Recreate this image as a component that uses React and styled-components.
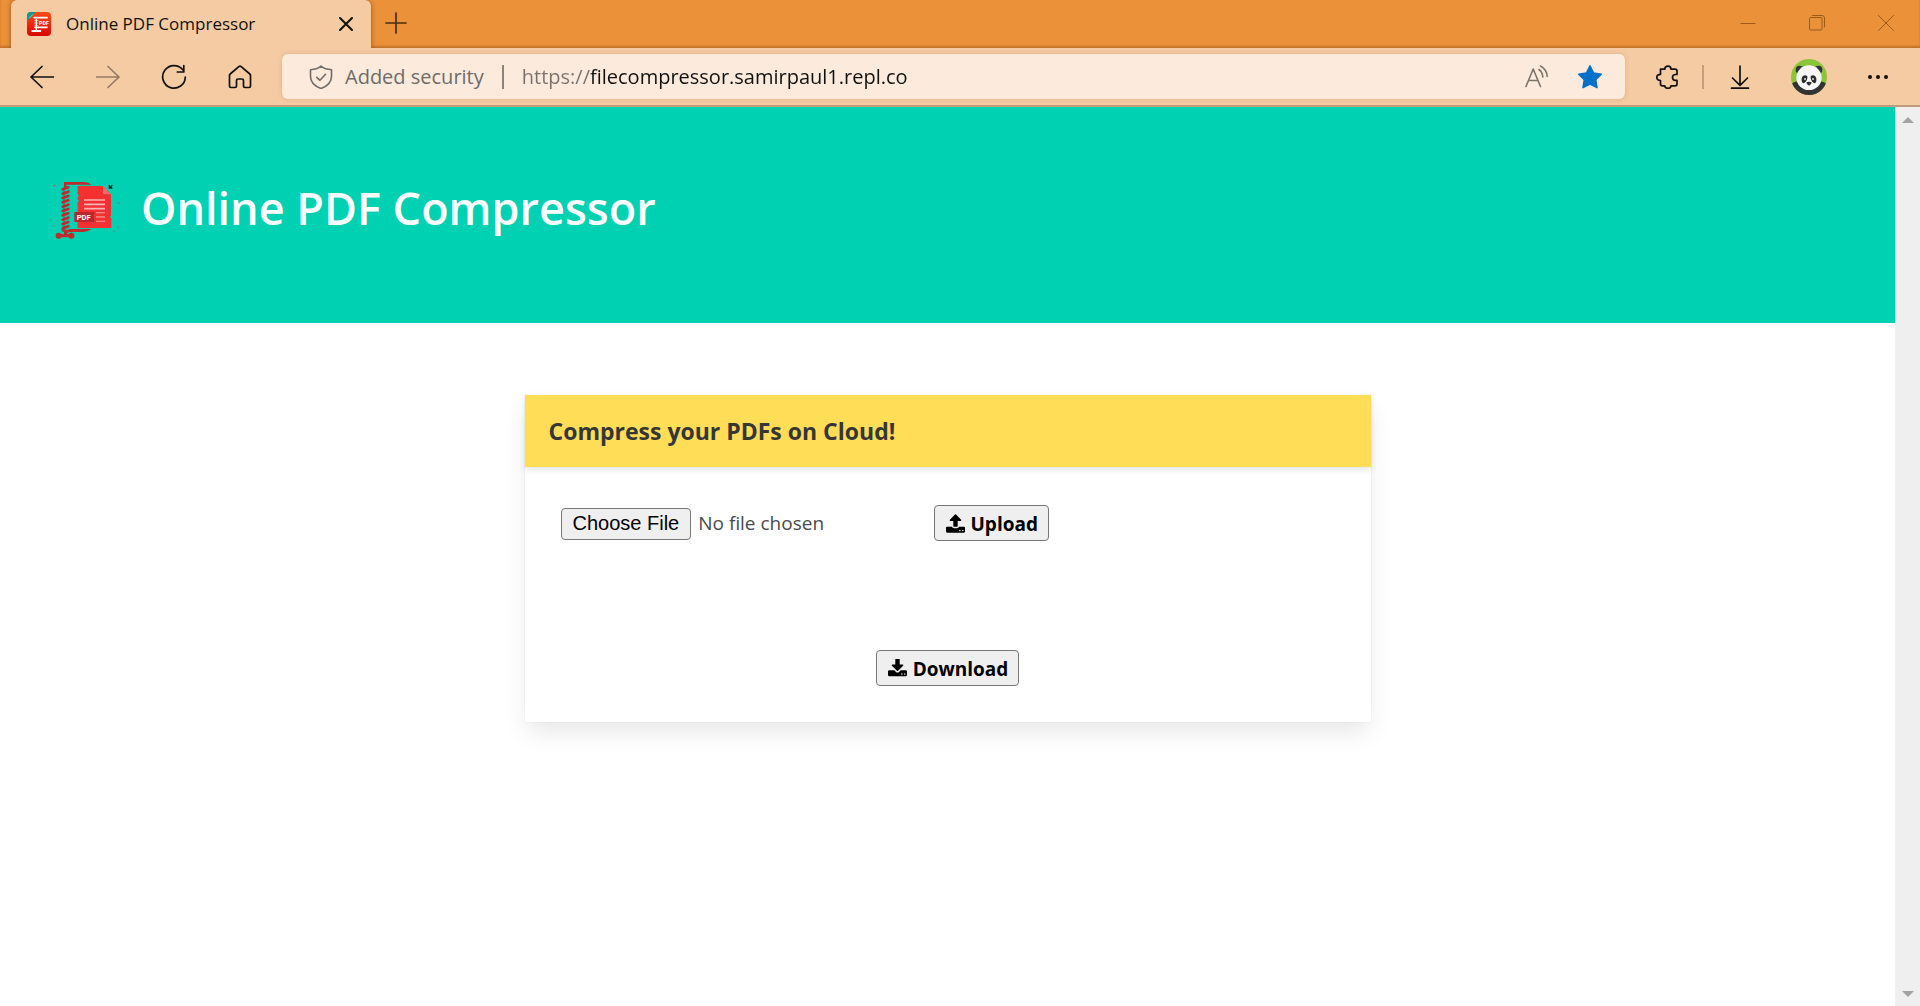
import React from "react";
import styled, { createGlobalStyle } from "styled-components";

const Global = createGlobalStyle`
  *, *::before, *::after { box-sizing: border-box; }
  body { margin: 0; background: #fff; }
  button, input { font: inherit; margin: 0; }
`;

const ui = `"Open Sans", "Noto Sans", sans-serif`;

const Window = styled.div`
  display: flex;
  flex-direction: column;
  height: 100vh;
  font-family: ${ui};
  overflow: hidden;
`;

const TabStrip = styled.header`
  display: flex;
  flex: none;
  height: 48px;
  padding-left: 11px;
  background: #eb9139;
  box-shadow: inset 0 -2px 2px rgba(120, 60, 10, 0.35);
`;

const Tab = styled.div`
  display: flex;
  align-items: center;
  width: 360px;
  padding: 0 10px 0 16px;
  border-radius: 6px 6px 0 0;
  background: #f5cba4;
  box-shadow: 0 0 5px rgba(100, 45, 0, 0.6);
  clip-path: inset(0 -6px 0 -6px);
`;

const TabTitle = styled.span`
  flex: 1;
  margin-left: 15px;
  font-size: 17px;
  line-height: 24px;
  color: #111;
  white-space: nowrap;
`;

const IconButton = styled.button`
  display: flex;
  align-items: center;
  justify-content: center;
  flex: none;
  width: ${(p) => p.$width}px;
  height: 46px;
  padding: 0;
  border: 0;
  background: none;
  color: ${(p) => p.$color || "#111"};
`;

const WindowControls = styled.div`
  display: flex;
  margin-left: auto;
`;

const Toolbar = styled.nav`
  display: flex;
  align-items: center;
  flex: none;
  height: 59px;
  padding: 0 9px;
  border-bottom: 2px solid #c09c7c;
  background: #f5cba4;
`;

const AddressBar = styled.form`
  display: flex;
  align-items: center;
  flex: 1;
  min-width: 0;
  height: 45px;
  margin: 0 8px 0 9px;
  padding: 0 8px 0 27px;
  border-radius: 6px;
  background: #fcebdc;
  box-shadow: 0 0 5px rgba(150, 80, 20, 0.22);
`;

const Security = styled.button`
  display: flex;
  align-items: center;
  gap: 12px;
  padding: 0;
  border: 0;
  background: none;
  color: #6f6b68;
  font-size: 20px;
  line-height: 28px;
  white-space: nowrap;
`;

const Rule = styled.span`
  flex: none;
  width: 2px;
  height: 24px;
  margin: 0 ${(p) => p.$gap}px;
  background: ${(p) => p.$color};
`;

const Url = styled.input`
  flex: 1;
  min-width: 0;
  height: 32px;
  padding: 0;
  border: 0;
  outline: 0;
  font-size: 20px;
  color: transparent;
  background: linear-gradient(90deg, #777270 68px, #111 68px);
  -webkit-background-clip: text;
  background-clip: text;
`;

const Actions = styled.div`
  display: flex;
  align-items: center;
  gap: 3px;
`;

const Viewport = styled.div`
  display: flex;
  flex: 1;
  min-height: 0;
`;

const Page = styled.div`
  flex: 1;
  min-width: 0;
`;

const ScrollTrack = styled.div`
  display: flex;
  flex-direction: column;
  justify-content: space-between;
  width: 25px;
  background: #efefef;
`;

const ScrollButton = styled.button`
  display: flex;
  align-items: center;
  justify-content: center;
  height: 25px;
  padding: 0;
  border: 0;
  background: none;
`;

const Hero = styled.section`
  display: flex;
  align-items: flex-start;
  gap: 21px;
  padding: 68px 50px 78px;
  background: #00d1b2;
`;

const HeroTitle = styled.h1`
  margin: 0;
  font-size: 45px;
  font-weight: 600;
  line-height: 66px;
  color: #fff;
`;

const Main = styled.main`
  padding: 72px 24px;
`;

const Card = styled.section`
  max-width: 846px;
  margin: 0 auto;
  background: #fff;
  box-shadow: 0 12px 24px -3px rgba(10, 10, 10, 0.1), 0 0 0 1px rgba(10, 10, 10, 0.02);
`;

const CardTitle = styled.h2`
  margin: 0;
  padding: 20px 24px;
  background: #ffdd57;
  box-shadow: 0 3px 6px rgba(10, 10, 10, 0.1);
  font-size: 23px;
  font-weight: 700;
  line-height: 32px;
  color: #363636;
`;

const CardBody = styled.div`
  display: flex;
  flex-direction: column;
  gap: 109px;
  padding: 38px 36px 36px;
`;

const UploadRow = styled.form`
  display: grid;
  grid-template-columns: 373px auto;
  justify-content: start;
  align-items: end;
`;

const FileInput = styled.input`
  height: 34px;
  font-size: 19px;
  line-height: 32px;
  color: #4a4a4a;

  &::file-selector-button {
    height: 32px;
    margin: 0 7px 0 0;
    padding: 0 11px;
    border: 1px solid #767676;
    border-radius: 4px;
    background: #efefef;
    color: #000;
    font: 20px "Liberation Sans", Arial, sans-serif;
  }
`;

const ActionButton = styled.button`
  display: flex;
  align-items: center;
  align-self: center;
  gap: 6px;
  height: 36px;
  padding: 1px 10px 0 11px;
  border: 1px solid #767676;
  border-radius: 4px;
  background: #efefef;
  color: #000;
  font-size: 19px;
  font-weight: 700;
  line-height: 32px;
`;

function Stroke({ w, h = w, d, sw = 1.7, children }) {
  return (
    <svg width={w} height={h} viewBox={`0 0 ${w} ${h}`} fill="none" stroke="currentColor"
      strokeWidth={sw} strokeLinecap="round" strokeLinejoin="round" aria-hidden="true">
      {d && <path d={d} />}
      {children}
    </svg>
  );
}

function Favicon() {
  return (
    <svg width="24" height="24" viewBox="0 0 72 72" aria-hidden="true">
      <defs>
        <linearGradient id="fav" x1="0" y1="0" x2="0" y2="1">
          <stop offset="0" stopColor="#ff4a12" />
          <stop offset="1" stopColor="#d80606" />
        </linearGradient>
      </defs>
      <rect width="72" height="72" rx="12" fill="url(#fav)" />
      <path d="M12 0H27L0 27V12Q0 0 12 0Z" fill="#109c8c" />
      <path d="M7 18L18 7" stroke="#7fd6cc" strokeWidth="3" />
      <path d="M22 17H60M24 46H60" stroke="#fff" strokeWidth="5" strokeLinecap="round" />
      <path d="M28 20V56" stroke="#fff" strokeWidth="4" />
      <path d="M16 57H40" stroke="#fff" strokeWidth="6" strokeLinecap="round" />
      <path d="M22 26H34M22 33H34M22 40H34" stroke="#fff" strokeWidth="2" />
      <text x="36" y="38" fontSize="16" fontWeight="700" fill="#fff" fontFamily="Roboto, sans-serif">PDF</text>
    </svg>
  );
}

function Panda() {
  return (
    <svg width="36" height="36" viewBox="0 0 108 108" aria-hidden="true">
      <clipPath id="avatar"><circle cx="54" cy="54" r="54" /></clipPath>
      <g clipPath="url(#avatar)">
        <rect width="108" height="108" fill="#8ac53a" />
        <path d="M0 108V76Q10 66 22 68H86Q98 66 108 76V108Z" fill="#333" />
        <circle cx="26" cy="32" r="12" fill="#333" />
        <circle cx="82" cy="32" r="12" fill="#333" />
        <ellipse cx="54" cy="56" rx="38" ry="37" fill="#f7f7f7" />
        <path d="M32 66Q30 51 42 49Q51 49 49 58Q46 70 38 73Q33 73 32 66Z" fill="#2d2d2d" />
        <path d="M76 66Q78 51 66 49Q57 49 59 58Q62 70 70 73Q75 73 76 66Z" fill="#2d2d2d" />
        <path d="M46 70Q54 66 62 70Q61 77 54 80Q47 77 46 70Z" fill="#2d2d2d" />
        <circle cx="42" cy="60" r="3" fill="#ddd" />
        <circle cx="66" cy="60" r="3" fill="#ddd" />
      </g>
    </svg>
  );
}

function PdfLogo() {
  const threads = [38, 51, 64, 77, 90, 103, 116, 129, 142, 155];
  return (
    <svg width="70" height="70" viewBox="0 0 210 210" aria-hidden="true">
      <path d="M42 21H103Q116 22 125 29H49V36H42Z" fill="#bf2a2c" />
      <path d="M35 163H49V166L60 162H125Q115 170 100 171H58L52 174V180H42V171L35 168Z" fill="#bf2a2c" />
      {threads.map((y) => (
        <path key={y} d={`M38 ${y + 5}L55 ${y - 1}`} stroke="#bf2a2c" strokeWidth="8" strokeLinecap="round" />
      ))}
      <path d="M42 38V160" stroke="#bf2a2c" strokeWidth="3" />
      <path d="M25 182H65" stroke="#bf2a2c" strokeWidth="9" />
      <circle cx="26" cy="182" r="9" fill="#bf2a2c" />
      <circle cx="64" cy="182" r="9" fill="#bf2a2c" />
      <path d="M83 33H159L183 58V121L180 126L184 131V159H83V83L87 78L83 72V66L87 61L83 57Z" fill="#f53030" />
      <path d="M159 33L183 58H165Q159 58 159 52Z" fill="#f96a6a" />
      <path d="M102 75H165M102 88H165M102 101H165" stroke="#fbb5b5" strokeWidth="5" />
      <path d="M138 113H165M138 126H165M138 139H165" stroke="#f98d8d" strokeWidth="4" />
      <rect x="73" y="111" width="59" height="30" fill="#b9272b" />
      <text x="80" y="134" fontSize="23" fontWeight="700" fill="#fff" fontFamily="Roboto, sans-serif">PDF</text>
      <path d="M187 30L179 38M178 30V39H187" stroke="#222" strokeWidth="4" fill="none" />
      <path d="M10 31H17M13 28V36M202 84H209M0 134H5M9 154H13M201 156H205M190 169H194" stroke="#6d8874" strokeWidth="4" />
    </svg>
  );
}

function TrayIcon({ d }) {
  return (
    <svg width="19" height="19" viewBox="64 32 1664 1664" fill="currentColor" aria-hidden="true">
      <path d={d} />
    </svg>
  );
}

const trayUp =
  "M1344 1472q0-26-19-45t-45-19-45 19-19 45 19 45 45 19 45-19 19-45zm256 0q0-26-19-45t-45-19-45 19-19 45 19 45 45 19 45-19 19-45zm128-224v320q0 40-28 68t-68 28h-1472q-40 0-68-28t-28-68v-320q0-40 28-68t68-28h427q21 56 70.5 92t110.5 36h256q61 0 110.5-36t70.5-92h427q40 0 68 28t28 68zm-325-648q-17 40-59 40h-256v448q0 26-19 45t-45 19h-256q-26 0-45-19t-19-45v-448h-256q-42 0-59-40-17-39 14-69l448-448q18-19 45-19t45 19l448 448q31 30 14 69z";
const trayDown =
  "M1344 1344q0-26-19-45t-45-19-45 19-19 45 19 45 45 19 45-19 19-45zm256 0q0-26-19-45t-45-19-45 19-19 45 19 45 45 19 45-19 19-45zm128-224v320q0 40-28 68t-68 28h-1472q-40 0-68-28t-28-68v-320q0-40 28-68t68-28h465l135 136q58 56 136 56t136-56l136-136h464q40 0 68 28t28 68zm-325-569q17 41-14 70l-448 448q-18 19-45 19t-45-19l-448-448q-31-29-14-70 17-39 59-39h256v-448q0-26 19-45t45-19h256q26 0 45 19t19 45v448h256q42 0 59 39z";

export default function App() {
  return (
    <Window>
      <Global />
      <TabStrip>
        <Tab>
          <Favicon />
          <TabTitle>Online PDF Compressor</TabTitle>
          <IconButton $width={30} aria-label="Close tab">
            <Stroke w={14} d="M1 1L13 13M13 1L1 13" sw={2} />
          </IconButton>
        </Tab>
        <IconButton $width={50} $color="#4a2c10" aria-label="New tab">
          <Stroke w={22} d="M11 1V21M1 11H21" />
        </IconButton>
        <WindowControls>
          <IconButton $width={69} $color="#985b20" aria-label="Minimize">
            <Stroke w={16} d="M1 8.5H15" sw={1} />
          </IconButton>
          <IconButton $width={69} $color="#985b20" aria-label="Restore">
            <Stroke w={16} sw={1}>
              <rect x="0.5" y="2.5" width="12.5" height="12.5" rx="1" />
              <path d="M3.5 .5H13Q15.5 .5 15.5 3V12" />
            </Stroke>
          </IconButton>
          <IconButton $width={69} $color="#985b20" aria-label="Close window">
            <Stroke w={16} d="M.5 .5L15.5 15.5M15.5 .5L.5 15.5" sw={1} />
          </IconButton>
        </WindowControls>
      </TabStrip>

      <Toolbar aria-label="Browser">
        <IconButton $width={66} aria-label="Back">
          <Stroke w={24} d="M23.5 12H1M12 1.5L1 12L12 22.5" />
        </IconButton>
        <IconButton $width={66} $color="#957b63" aria-label="Forward">
          <Stroke w={24} d="M.5 12H23M12 1.5L23 12L12 22.5" />
        </IconButton>
        <IconButton $width={66} aria-label="Refresh">
          <Stroke w={26} d="M24.3 13A11.3 11.3 0 1 1 22 6M22.8 1.5V8H16.3" />
        </IconButton>
        <IconButton $width={66} aria-label="Home">
          <Stroke w={24} d="M1.5 10.5Q1.5 9.6 2.2 9L10.8 1.6Q12 .7 13.2 1.6L21.8 9Q22.5 9.6 22.5 10.5V21Q22.5 22.5 21 22.5H17Q15.5 22.5 15.5 21V15.5Q15.5 14 14 14H10Q8.5 14 8.5 15.5V21Q8.5 22.5 7 22.5H3Q1.5 22.5 1.5 21Z" />
        </IconButton>
        <AddressBar onSubmit={(e) => e.preventDefault()}>
          <Security type="button">
            <Stroke w={24} d="M12 1.2Q16 4.5 22.5 4.7V11.5Q22.5 19.5 12 23.5Q1.5 19.5 1.5 11.5V4.7Q8 4.5 12 1.2ZM7.8 12.3L11 15.3L16.5 9.3" sw={1.6} />
            Added security
          </Security>
          <Rule $gap={18} $color="#8b8580" />
          <Url aria-label="Address" defaultValue="https://filecompressor.samirpaul1.repl.co" spellCheck={false} />
          <IconButton type="button" $width={54} $color="#7b736c" aria-label="Read aloud">
            <Stroke w={24} d="M2 21.5L9.2 4L16.500 21.500M4.600 15.500H13.800M15 4.500Q18.500 7 18.800 12M16.500 1Q22.800 4.500 23.200 11.500" sw={1.6} />
          </IconButton>
          <IconButton type="button" $width={54} $color="#0070c9" aria-label="Favourite">
            <svg width="26" height="26" viewBox="0 0 26 26" fill="currentColor" stroke="currentColor" strokeWidth="1.5" strokeLinejoin="round" aria-hidden="true">
              <path d="M13 1.8L16.6 9L24.3 10.200L18.700 15.700L20 23.700L13 20L6 23.700L7.300 15.700L1.700 10.200L9.400 9Z" />
            </svg>
          </IconButton>
        </AddressBar>
        <Actions>
          <IconButton $width={66} aria-label="Extensions">
            <Stroke w={24}>
              <path transform="translate(1.5 0)" d="M5 4.2H9.3Q9.3 1.2 12.5 1.2Q15.5 1.2 15.5 4.2H19.5Q21.5 4.2 21.5 6V9.5H20Q17 9.5 17 12.5Q17 15.3 20 15.3H21.5V19Q21.5 20.8 19.5 20.8H15.5Q15.5 23.300 12.500 23.300Q9.300 23.300 9.300 20.800H7Q5 20.800 5 19V15.500Q1.300 15.500 1.300 12.300Q1.300 9.300 5 9.300Z" />
            </Stroke>
          </IconButton>
          <Rule $gap={0} $color="#c1a080" />
          <IconButton $width={66} aria-label="Downloads">
            <Stroke w={24} d="M12 1V20M4.5 13L12 20.3L19.5 13M3.5 23.2H20.5" />
          </IconButton>
          <IconButton $width={66} aria-label="Profile"><Panda /></IconButton>
          <IconButton $width={66} aria-label="Settings and more">
            <svg width="22" height="6" viewBox="0 0 22 6" fill="currentColor" aria-hidden="true">
              <circle cx="3" cy="3" r="2" /><circle cx="11" cy="3" r="2" /><circle cx="19" cy="3" r="2" />
            </svg>
          </IconButton>
        </Actions>
      </Toolbar>

      <Viewport>
        <Page>
          <Hero>
            <PdfLogo />
            <HeroTitle>Online PDF Compressor</HeroTitle>
          </Hero>
          <Main>
            <Card>
              <CardTitle>Compress your PDFs on Cloud!</CardTitle>
              <CardBody>
                <UploadRow onSubmit={(e) => e.preventDefault()}>
                  <FileInput type="file" accept="application/pdf" aria-label="PDF file" />
                  <ActionButton><TrayIcon d={trayUp} />Upload</ActionButton>
                </UploadRow>
                <ActionButton type="button"><TrayIcon d={trayDown} />Download</ActionButton>
              </CardBody>
            </Card>
          </Main>
        </Page>
        <ScrollTrack>
          <ScrollButton aria-label="Scroll up">
            <svg width="12" height="6" viewBox="0 0 12 6" aria-hidden="true"><path d="M0 6L6 0L12 6Z" fill="#a3a3a3" /></svg>
          </ScrollButton>
          <ScrollButton aria-label="Scroll down">
            <svg width="12" height="6" viewBox="0 0 12 6" aria-hidden="true"><path d="M0 0L6 6L12 0Z" fill="#a3a3a3" /></svg>
          </ScrollButton>
        </ScrollTrack>
      </Viewport>
    </Window>
  );
}
